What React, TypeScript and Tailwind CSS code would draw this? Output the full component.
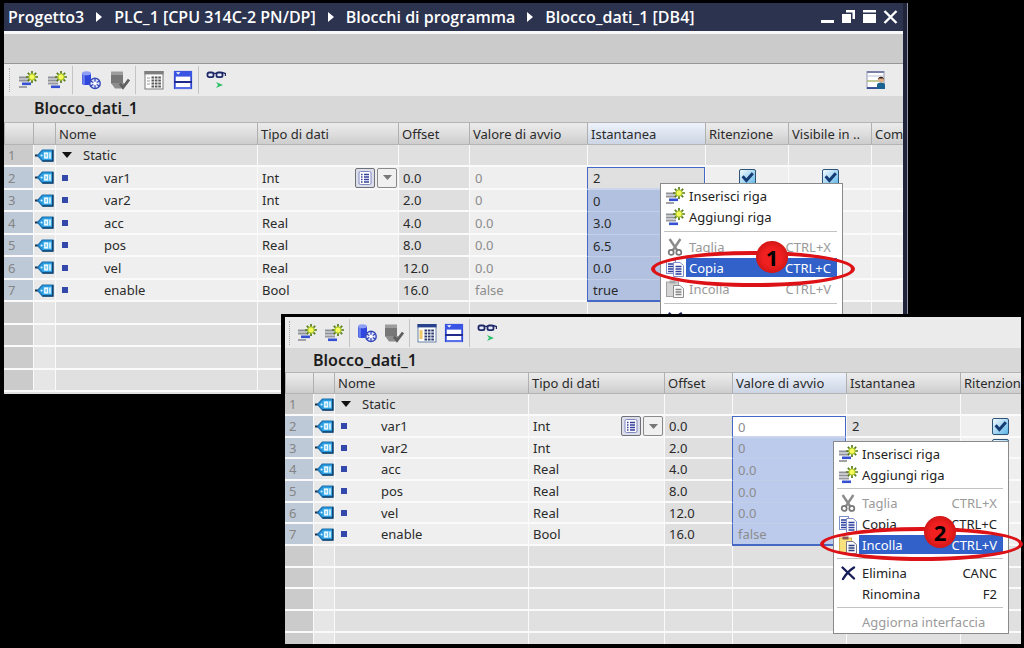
import React from "react";

type Row = { name: string; type: string; offset: string; start: string; snap: string };

const rows: Row[] = [
  { name: "var1", type: "Int", offset: "0.0", start: "0", snap: "2" },
  { name: "var2", type: "Int", offset: "2.0", start: "0", snap: "0" },
  { name: "acc", type: "Real", offset: "4.0", start: "0.0", snap: "3.0" },
  { name: "pos", type: "Real", offset: "8.0", start: "0.0", snap: "6.5" },
  { name: "vel", type: "Real", offset: "12.0", start: "0.0", snap: "0.0" },
  { name: "enable", type: "Bool", offset: "16.0", start: "false", snap: "true" },
];

function RowLines({ last }: { last?: boolean }) {
  return (
    <g>
      <path d="M1 6.5H12M1 9.5H11" stroke="#8f9298" strokeWidth="2" />
      {last ? <path d="M1 12.5H11" stroke="#96999f" strokeWidth="2" /> : <path d="M1 16H9" stroke="#a0a2a6" strokeWidth="2" />}
      <path d={last ? "M4 15.8H13" : "M4 12.8H13"} stroke="#3550d0" strokeWidth="2.6" />
      <path d="M14 0V12M8 6H20M9.8 1.8L18.2 10.2M18.2 1.8L9.8 10.2" stroke="#587a1a" strokeWidth="1.7" />
      <circle cx="14" cy="6" r="3.2" fill="#f4fa5a" stroke="#9cc022" strokeWidth="1" />
    </g>
  );
}

const InsertIcon = () => (
  <svg width="20" height="18" viewBox="0 0 20 18" fill="none" aria-hidden="true"><RowLines /></svg>
);
const AddIcon = () => (
  <svg width="20" height="18" viewBox="0 0 20 18" fill="none" aria-hidden="true"><RowLines last /></svg>
);

const DbIcon = () => (
  <svg width="20" height="20" viewBox="0 0 20 20" fill="none" aria-hidden="true">
    <path d="M1 3.2V13.5C1 15.5 10 15.5 10 13.5V3.2Z" fill="#2f47dc" />
    <path d="M1.4 4V13.6C2.2 14.4 3 14.7 3.8 14.7V5Z" fill="#6b80ee" />
    <ellipse cx="5.5" cy="3.2" rx="4.5" ry="2" fill="#8fa0f4" />
    <circle cx="14" cy="13.4" r="5.2" fill="#dfe3ff" stroke="#3347b5" strokeWidth="1.4" />
    <path d="M14 8.4V18.4M9.7 11L18.3 16M18.3 11L9.7 16" stroke="#3347b5" strokeWidth="1.3" />
    <circle cx="14" cy="13.4" r="1.9" fill="#fff" />
  </svg>
);

const DbCheckIcon = () => (
  <svg width="20" height="20" viewBox="0 0 20 20" fill="none" aria-hidden="true">
    <path d="M1 2.5H13V13.5H1Z" fill="#777" />
    <path d="M1 1.5H13V5H1Z" fill="#9d9d9d" />
    <path d="M1 13L5 18.5H14V13Z" fill="#8d8d8d" />
    <path d="M10 13.5L13 17.5L19 9.5" stroke="#5f5f5f" strokeWidth="2.8" />
  </svg>
);

const ListIcon = ({ active }: { active?: boolean }) => (
  <svg width="20" height="20" viewBox="0 0 20 20" fill="none" aria-hidden="true">
    <rect x="1" y="1.5" width="18" height="17.5" fill="#fdfdfd" stroke={active ? "#6b83a8" : "#7a7a7a"} />
    <rect x="0.5" y="1" width="19" height="3.4" fill={active ? "#27418c" : "#7d7d7d"} />
    {active ? <rect x="2.5" y="7" width="3" height="9" fill="#f0c96a" /> : <path d="M3 8H6M3 11H6M3 14H6" stroke="#9a9a9a" />}
    <path d="M7.5 7.5H17M7.5 10.5H17M7.5 13.5H17M7.5 16.4H17" stroke={active ? "#2c3c70" : "#5a5a5a"} strokeWidth="2" strokeDasharray="2.6 0.8" />
  </svg>
);

const SplitIcon = () => (
  <svg width="20" height="20" viewBox="0 0 20 20" fill="none" aria-hidden="true">
    <rect x="1.8" y="1.8" width="16.4" height="16.4" fill="#fff" stroke="#2f45d4" strokeWidth="1.8" />
    <rect x="1" y="1" width="18" height="5.6" fill="#3a55e4" />
    <path d="M3 2.2H7.4L5.2 4.6Z" fill="#fff" />
    <path d="M1 12H19" stroke="#1f2c8c" strokeWidth="2" />
    <path d="M2 18H18" stroke="#5a70e8" strokeWidth="2" />
  </svg>
);

const GlassesIcon = () => (
  <svg width="20" height="20" viewBox="0 0 20 20" fill="none" aria-hidden="true">
    <rect x="1.5" y="2.5" width="6" height="4.6" rx="1.6" fill="#e6ebfa" stroke="#1d2766" strokeWidth="1.8" />
    <rect x="10.5" y="2.5" width="6" height="4.6" rx="1.6" fill="#e6ebfa" stroke="#1d2766" strokeWidth="1.8" />
    <path d="M7 3.4H11M16 2.4L19.5 3.6V6" stroke="#1d2766" strokeWidth="1.4" />
    <path d="M10 12L17 15L10 18L12 15Z" fill="#2fc06a" />
  </svg>
);

const UserViewIcon = () => (
  <svg width="20" height="20" viewBox="0 0 20 20" fill="none" aria-hidden="true">
    <rect x="1" y="1.5" width="17" height="17" fill="#fff" stroke="#9398b5" />
    <path d="M1 2H18" stroke="#7a80a8" strokeWidth="2" />
    <path d="M1 6H18" stroke="#b9bdd4" />
    <path d="M1 11H18" stroke="#a8b26e" strokeWidth="1.4" />
    <path d="M1 18H12" stroke="#2d4490" strokeWidth="1.8" />
    <circle cx="15" cy="9.6" r="2.8" fill="#e5ae86" />
    <path d="M12 10C12 5.6 18 5.6 18 10L17 8.6H13Z" fill="#2a1d16" />
    <path d="M11 19V15C11 11.8 19 11.8 19 15V19Z" fill="#1d6391" />
  </svg>
);

const TagIcon = () => (
  <svg width="19" height="13" viewBox="0 0 19 13" fill="none" aria-hidden="true">
    <path d="M0 6.5H5" stroke="#16334a" strokeWidth="2" />
    <path d="M2.6 6.5L7.4 1H17.8V12H7.4Z" fill="#2b9be0" stroke="#1b70b0" strokeWidth="1.2" />
    <path d="M17.8 1V12H7.4" stroke="#12426e" strokeWidth="1.6" />
    <rect x="8.4" y="3" width="8" height="7" fill="#58bdf0" />
    <path d="M9.8 4.2H12.4V8.8H9.8ZM15 3.4V9.6" stroke="#effaff" strokeWidth="1.4" />
    <circle cx="6.6" cy="6.5" r="1.1" fill="#d9f2ff" />
  </svg>
);

const ScissorsIcon = () => (
  <svg width="20" height="18" viewBox="0 0 20 18" fill="none" aria-hidden="true">
    <path d="M4.6 1L12 12M15.4 1L8 12" stroke="#8b8b8b" strokeWidth="2.4" />
    <circle cx="6.2" cy="14.4" r="2.5" stroke="#777" strokeWidth="1.7" />
    <circle cx="13.8" cy="14.4" r="2.5" stroke="#777" strokeWidth="1.7" />
  </svg>
);

const CopyIcon = () => (
  <svg width="20" height="18" viewBox="0 0 20 18" fill="none" aria-hidden="true">
    <rect x="1.5" y="1.5" width="9" height="13" fill="#fff" stroke="#7f8fcb" />
    <path d="M3 5H8M3 7.5H8M3 10H8M3 12.5H8" stroke="#2c3f9e" strokeWidth="1.7" />
    <path d="M8.5 3.5H15L18.5 6.5V17.5H8.5Z" fill="#fff" stroke="#7f8fcb" />
    <path d="M10.5 7.5H16.5M10.5 10H16.5M10.5 12.5H16.5M10.5 15H16.5" stroke="#2c3f9e" strokeWidth="1.7" />
  </svg>
);

const PasteIcon = ({ off }: { off?: boolean }) => (
  <svg width="20" height="18" viewBox="0 0 20 18" fill="none" aria-hidden="true">
    <rect x="1.5" y="2" width="12" height="14.5" fill={off ? "#d4d4d4" : "#f9e27c"} stroke={off ? "#a2a2a2" : "#d4b252"} />
    <rect x="4.5" y="0.5" width="6" height="3" fill={off ? "#a8a8a8" : "#8b5a4c"} />
    <path d="M8.5 5.5H15L18.5 8.5V17.5H8.5Z" fill="#fbfbfb" stroke={off ? "#8e8e8e" : "#7a7a86"} />
    <path d="M10.5 9.5H16.5M10.5 12H16.5M10.5 14.5H16.5" stroke={off ? "#858585" : "#2c3f7e"} strokeWidth="1.5" />
  </svg>
);

const DeleteIcon = () => (
  <svg width="20" height="18" viewBox="0 0 20 18" fill="none" aria-hidden="true">
    <path d="M4.5 3.5L16 14.5M16 3.5C12 6 8 10 5 15" stroke="#171c56" strokeWidth="2.4" strokeLinecap="round" />
  </svg>
);

function ToolButton({ label, children }: { label: string; children: React.ReactNode }) {
  return (
    <button type="button" aria-label={label} className="flex size-5 shrink-0 items-center justify-center">
      {children}
    </button>
  );
}

const Divider = () => <span className="h-7 w-px shrink-0 bg-[#c4c4c4]" />;

function Toolbar({ small }: { small?: boolean }) {
  const group = small ? "flex gap-[7px] pl-[2px]" : "flex gap-[9px] pl-[3px]";
  return (
    <div className={small ? "flex h-[31px] items-center gap-[5px] bg-[#ebebeb] pl-1" : "flex h-8 items-center gap-[5px] bg-[#ebebeb] pl-[5px]"}>
      <span className="h-6 shrink-0 border-l border-dotted border-[#a8a8a8]" />
      <div className={group}>
        <ToolButton label="Inserisci riga"><InsertIcon /></ToolButton>
        <ToolButton label="Aggiungi riga"><AddIcon /></ToolButton>
      </div>
      <Divider />
      <div className={group}>
        <ToolButton label="Valori di avvio"><DbIcon /></ToolButton>
        <ToolButton label="Applica valori"><DbCheckIcon /></ToolButton>
      </div>
      <Divider />
      <div className={group}>
        <ToolButton label="Valori istantanei"><ListIcon active={small} /></ToolButton>
        <ToolButton label="Modo esteso"><SplitIcon /></ToolButton>
      </div>
      <Divider />
      <div className="flex grow pl-[2px]">
        <ToolButton label="Controlla tutto"><GlassesIcon /></ToolButton>
      </div>
      {small ? null : (
        <div className="pr-[17px]">
          <ToolButton label="Vista utente"><UserViewIcon /></ToolButton>
        </div>
      )}
    </div>
  );
}

function Check({ label }: { label: string }) {
  return (
    <span className="mx-auto grid size-[17px]">
      <input
        type="checkbox"
        defaultChecked
        aria-label={label}
        className="col-start-1 row-start-1 size-[17px] appearance-none rounded-xs border border-[#2b5478] bg-linear-to-br from-[#f2fbff] to-[#58b4e6]"
      />
      <svg viewBox="0 0 17 17" fill="none" aria-hidden="true" className="pointer-events-none col-start-1 row-start-1 size-[17px]">
        <path d="M3.6 7.2L7.4 11.4L13.8 4.2" stroke="#143c74" strokeWidth="3" />
      </svg>
    </span>
  );
}

const line = "border-l border-b-2 border-l-[#fafafa] border-b-[#fafafa]";

function BlockTable({ second }: { second?: boolean }) {
  const heads = second
    ? ["", "", "Nome", "Tipo di dati", "Offset", "Valore di avvio", "Istantanea", "Ritenzione"]
    : ["", "", "Nome", "Tipo di dati", "Offset", "Valore di avvio", "Istantanea", "Ritenzione", "Visibile in ..", "Com"];
  const picked = second ? 5 : 6;
  const tr = second ? "h-[22px] nth-[3n]:h-[21px]" : "h-[22px] even:h-[23px]";
  const blanks = second ? [0, 1, 2, 3, 4] : [0, 1, 2, 3];
  const extra = heads.slice(7);
  const ring = (i: number) =>
    i === 0
      ? `border-x border-t border-x-[#4468c4] border-t-[#4468c4] border-b-2 border-b-[#cbd6ec] ${second ? "bg-white" : "bg-[#e0e0e0]"}`
      : i === 5
        ? `border-x border-b-2 border-[#4468c4] ${second ? "bg-[#bccbec]" : "bg-[#b2c1e0]"}`
        : `border-x border-b border-x-[#4468c4] border-b-[#c3cfe9] ${second ? "bg-[#bccbec]" : "bg-[#b2c1e0]"}`;
  return (
    <table
      className={`table-fixed border-separate border-spacing-0 text-left whitespace-nowrap text-[#2a2a2a] ${second ? "w-[calc(100%+18px)]" : "w-full"}`}
    >
      <colgroup>
        {second ? (
          <>
            <col className="w-[28px]" /><col className="w-[21px]" /><col className="w-[194px]" /><col className="w-[136px]" />
            <col className="w-[68px]" /><col className="w-[114px]" /><col className="w-[114px]" /><col />
          </>
        ) : (
          <>
            <col className="w-[29px]" /><col className="w-[22px]" /><col className="w-[202px]" /><col className="w-[141px]" />
            <col className="w-[71px]" /><col className="w-[118px]" /><col className="w-[118px]" /><col className="w-[83px]" />
            <col className="w-[83px]" /><col />
          </>
        )}
      </colgroup>
      <thead>
        <tr className={second ? "h-[22px]" : "h-[23px]"}>
          {heads.map((h, i) => (
            <th
              key={i}
              scope="col"
              className={`overflow-hidden border-y border-l border-y-[#b4b4b4] border-l-[#b0b0b0] p-0 pl-[3px] font-normal ${
                i === picked ? "bg-linear-to-b from-[#eef2fb] to-[#ccd5e4]" : "bg-linear-to-b from-[#ececec] via-[#dedede] to-[#cdcdcd]"
              }`}
            >
              {h}
            </th>
          ))}
        </tr>
      </thead>
      <tbody>
        <tr className={tr}>
          <td className="border-b-2 border-[#fafafa] bg-[#cbcbcb] p-0 pl-1 text-[#858585]">1</td>
          <td className={`${line} bg-[#e6e6e6] p-0 pl-px`}><TagIcon /></td>
          <td className={`${line} bg-[#e0e0e0] p-0`}>
            <div className="flex items-center gap-[11px] pl-[6px]">
              <svg width="10" height="6" viewBox="0 0 10 6" aria-hidden="true"><path d="M0 0H10L5 6Z" fill="#111" /></svg>
              Static
            </div>
          </td>
          {heads.slice(3).map((h) => <td key={h} className={`${line} bg-[#e0e0e0] p-0`} />)}
        </tr>
        {rows.map((r, i) => (
          <tr key={r.name} className={tr}>
            <td className="border-b-2 border-[#fafafa] bg-[#bdc9d6] p-0 pl-1 text-[#858585]">{i + 2}</td>
            <td className={`${line} bg-[#e9e9e9] p-0 pl-px`}><TagIcon /></td>
            <td className={`${line} bg-[#efefef] p-0`}>
              <div className={second ? "flex items-center gap-[34px] pl-[6px]" : "flex items-center gap-9 pl-[6px]"}>
                <span className="size-[6px] bg-[#3448ac]" />
                {r.name}
              </div>
            </td>
            <td className={`${line} bg-[#efefef] p-0 pl-1`}>
              <div className="flex items-center justify-between">
                {r.type}
                {i === 0 ? (
                  <span className="flex h-5 gap-[2px] pr-px">
                    <button type="button" aria-label="Elenco tipi" className="flex h-5 w-5 items-center justify-center rounded-xs border border-[#707078] bg-[#dcdfea]">
                      <svg width="14" height="14" viewBox="0 0 14 14" fill="none" aria-hidden="true">
                        <rect x="1" y="0.5" width="12" height="13" rx="1.5" fill="#fff" stroke="#8088c0" />
                        <path d="M3 3.5H4.5M3 6H4.5M3 8.5H4.5M3 11H4.5M6 3.5H11M6 6H11M6 8.5H11M6 11H11" stroke="#35409c" strokeWidth="1.6" />
                      </svg>
                    </button>
                    <button type="button" aria-label="Apri elenco" className="flex h-5 w-5 items-center justify-center rounded-xs border border-[#8a8a8a] bg-[#f0f0f0]">
                      <svg width="9" height="5" viewBox="0 0 9 5" aria-hidden="true"><path d="M0 0H9L4.5 5Z" fill="#777" /></svg>
                    </button>
                  </span>
                ) : null}
              </div>
            </td>
            <td className={`${line} bg-[#dfdfdf] p-0 pl-1`}>{r.offset}</td>
            <td className={`p-0 pl-[5px] text-[#8c8c8c] ${second ? ring(i) : `${line} bg-[#efefef]`}`}>{r.start}</td>
            <td className={`p-0 pl-[5px] ${second ? `${line} bg-[#e0e0e0]` : ring(i)}`}>{r.snap}</td>
            {extra.map((h) => (
              <td key={h} className={`${line} bg-[#efefef] p-0`}>
                {h === "Com" ? null : <Check label={`${h} ${r.name}`} />}
              </td>
            ))}
          </tr>
        ))}
        {blanks.map((b) => (
          <tr key={b} className={tr}>
            <td className="border-b-2 border-[#fafafa] bg-[#cbcbcb] p-0" />
            <td className={`${line} bg-[#e6e6e6] p-0`} />
            {heads.slice(2).map((h) => <td key={h} className={`${line} bg-[#e0e0e0] p-0`} />)}
          </tr>
        ))}
      </tbody>
    </table>
  );
}

type Item = { label: string; keys?: string; icon?: React.ReactNode; off?: boolean; on?: boolean } | null;

function Menu({ items, className, separator }: { items: Item[]; className: string; separator: string }) {
  return (
    <div role="menu" className={`absolute border border-[#8a8a8a] bg-white py-px pr-[5px] pl-[3px] ${className}`}>
      {items.map((it, i) =>
        it === null ? (
          <div key={i} role="separator" className={`h-px bg-[#c2c2c2] ${separator}`} />
        ) : (
          <button
            key={i}
            type="button"
            role="menuitem"
            disabled={it.off}
            className={`flex h-[21px] w-full items-center whitespace-nowrap ${it.off ? "text-[#9a9a9a]" : "text-[#222]"}`}
          >
            <span className="flex w-[22px] shrink-0 pl-px">{it.icon}</span>
            <span className={`flex h-[19px] grow items-center justify-between pr-[6px] pl-[3px] ${it.on ? "bg-[#3161c9] text-white" : ""}`}>
              <span>{it.label}</span>
              <span>{it.keys}</span>
            </span>
          </button>
        ),
      )}
    </div>
  );
}

function Callout({ n, ring, badge }: { n: number; ring: string; badge: string }) {
  return (
    <>
      <span className={`pointer-events-none absolute rounded-[50%] border-4 border-[#dd1216] ${ring}`} />
      <span
        className={`pointer-events-none absolute flex size-8 items-center justify-center rounded-full bg-radial from-[#f02020] from-40% to-[#b80c0c] font-['Open_Sans',sans-serif] text-[22px] font-bold text-black ${badge}`}
      >
        {n}
      </span>
    </>
  );
}

const crumbs = ["Progetto3", "PLC_1 [CPU 314C-2 PN/DP]", "Blocchi di programma", "Blocco_dati_1 [DB4]"];

function menuItems(second: boolean): Item[] {
  return [
    { label: "Inserisci riga", icon: <InsertIcon /> },
    { label: "Aggiungi riga", icon: <AddIcon /> },
    null,
    { label: "Taglia", keys: "CTRL+X", icon: <ScissorsIcon />, off: true },
    { label: "Copia", keys: "CTRL+C", icon: <CopyIcon />, on: !second },
    { label: "Incolla", keys: "CTRL+V", icon: <PasteIcon off={!second} />, off: !second, on: second },
    null,
    { label: "Elimina", keys: "CANC", icon: <DeleteIcon /> },
    { label: "Rinomina", keys: "F2" },
    null,
    { label: "Aggiorna interfaccia", off: true },
  ];
}

export default function App() {
  return (
    <main className="relative h-screen overflow-hidden bg-black font-['Noto_Sans','Open_Sans',sans-serif] text-[13px] leading-4">
      <section aria-label="Editor del blocco dati" className="absolute top-[3px] right-[116px] left-1 border-r border-[#8f93a5]">
        <div className="border-r-4 border-b-2 border-r-[#1f2438] border-b-[#e0e0e0]">
          <header className="flex h-7 items-center bg-[#2b334f] pr-[5px] pl-1 text-white">
            <nav
              aria-label="Percorso"
              className="flex grow items-center gap-3 font-['Open_Sans','Noto_Sans',sans-serif] text-[16px] leading-5 font-semibold whitespace-nowrap"
            >
              {crumbs.map((c, i) => (
                <React.Fragment key={c}>
                  {i > 0 ? (
                    <svg width="6" height="10" viewBox="0 0 6 10" aria-hidden="true"><path d="M0 0L6 5L0 10Z" fill="#fff" /></svg>
                  ) : null}
                  <a href="#">{c}</a>
                </React.Fragment>
              ))}
            </nav>
            <div className="flex items-center gap-[6px]">
              <button type="button" aria-label="Riduci a icona">
                <svg width="15" height="14" viewBox="0 0 15 14"><path d="M1 10H14V13H1Z" fill="#fff" /></svg>
              </button>
              <button type="button" aria-label="Ripristina">
                <svg width="15" height="14" viewBox="0 0 15 14"><path d="M1 4H10V13H1ZM5 0H14V9H11.5V2.5H5Z" fill="#fff" /></svg>
              </button>
              <button type="button" aria-label="Ingrandisci">
                <svg width="15" height="14" viewBox="0 0 15 14"><path d="M1 0H14V2.5H1ZM1 4H14V13H1Z" fill="#fff" /></svg>
              </button>
              <button type="button" aria-label="Chiudi">
                <svg width="15" height="14" viewBox="0 0 15 14"><path d="M1.5 1L13.5 13M13.5 1L1.5 13" stroke="#fff" strokeWidth="2.4" /></svg>
              </button>
            </div>
          </header>
          <div className="h-[33px] border-t-[3px] border-b border-t-[#f8f8f8] border-b-[#979797] bg-[#cbcbcb]" />
          <Toolbar />
          <h1 className="flex h-[26px] items-center bg-[#d8d8d8] pb-[2px] pl-[30px] text-[16px] leading-5 font-semibold text-[#1c1c1c]">Blocco_dati_1</h1>
          <BlockTable />
        </div>
      </section>
      <Menu items={menuItems(false)} separator="my-1" className="top-[183px] left-[660px] w-[183px]" />
      <Callout n={1} ring="top-[251px] left-[651px] h-[36px] w-[204px]" badge="top-[241px] left-[756px]" />

      <section
        aria-label="Editor del blocco dati, valori di avvio"
        className="absolute top-[314px] right-0 bottom-[1px] left-[281px] overflow-hidden border-[3px] border-l-4 border-black bg-[#e0e0e0]"
      >
        <Toolbar small />
        <h2 className="flex h-6 items-center bg-[#d8d8d8] pb-px pl-7 text-[16px] leading-5 font-semibold text-[#1c1c1c]">Blocco_dati_1</h2>
        <BlockTable second />
      </section>
      <Menu items={menuItems(true)} separator="my-[3px]" className="top-[441px] left-[833px] w-[176px]" />
      <Callout n={2} ring="top-[527px] left-[820px] h-[34px] w-[203px]" badge="top-[516px] left-[924px]" />
    </main>
  );
}
